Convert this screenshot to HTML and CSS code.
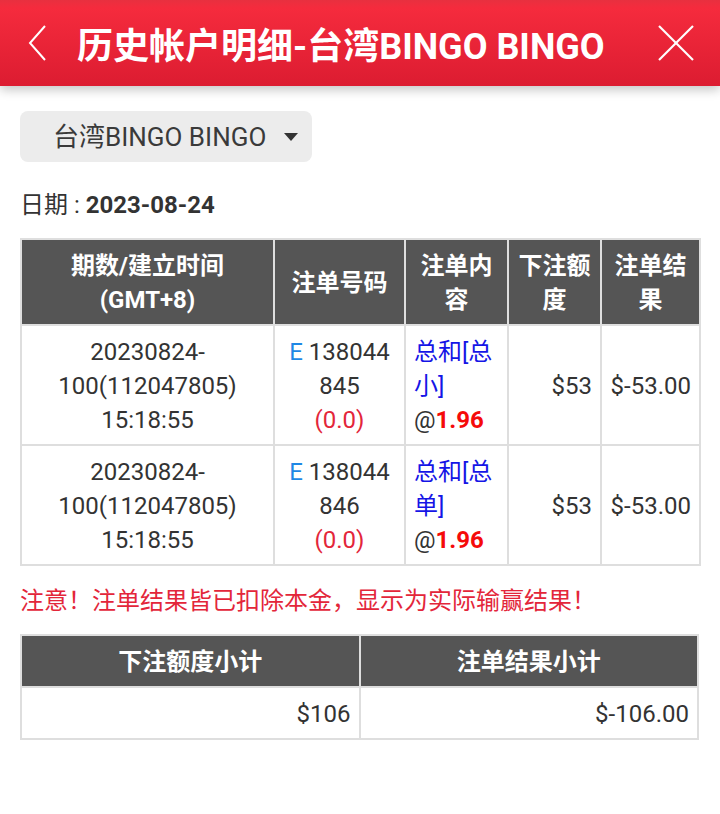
FILE: index.html
```html
<!DOCTYPE html>
<html lang="zh-CN">
<head>
    <meta charset="UTF-8">
    <meta name="viewport" content="width=device-width, initial-scale=1.0">
    <title>历史帐户明细-台湾BINGO BINGO</title>
    <link rel="stylesheet" href="styles.css">
</head>
<body>
    <header class="topbar">
        <svg class="back" width="20" height="36" viewBox="0 0 20 36">
            <polyline points="17,1 2,18 17,35" fill="none" stroke="#fff" stroke-width="2"/>
        </svg>
        <h1 class="title">历史帐户明细-台湾BINGO BINGO</h1>
        <svg class="close" width="36" height="36" viewBox="0 0 36 36">
            <line x1="1" y1="1" x2="35" y2="35" stroke="#fff" stroke-width="2.2"/>
            <line x1="35" y1="1" x2="1" y2="35" stroke="#fff" stroke-width="2.2"/>
        </svg>
    </header>

    <main class="content">
        <div class="picker">
            <span>台湾BINGO BINGO</span>
            <span class="caret"></span>
        </div>

        <p class="date">日期 : <b>2023-08-24</b></p>

        <table class="bets">
            <colgroup>
                <col style="width: 253px">
                <col style="width: 131px">
                <col style="width: 103px">
                <col style="width: 93px">
                <col style="width: 99px">
            </colgroup>
            <thead>
                <tr>
                    <th>期数/建立时间<br>(GMT+8)</th>
                    <th>注单号码</th>
                    <th>注单内容</th>
                    <th>下注额度</th>
                    <th>注单结果</th>
                </tr>
            </thead>
            <tbody>
                <tr>
                    <td class="center">20230824-<br>100(112047805)<br>15:18:55</td>
                    <td class="center"><span class="tag">E</span> 138044 845<br><span class="red">(0.0)</span></td>
                    <td class="left"><span class="blue">总和[总小]</span><br>@<b class="odds">1.96</b></td>
                    <td class="right">$53</td>
                    <td class="right">$-53.00</td>
                </tr>
                <tr>
                    <td class="center">20230824-<br>100(112047805)<br>15:18:55</td>
                    <td class="center"><span class="tag">E</span> 138044 846<br><span class="red">(0.0)</span></td>
                    <td class="left"><span class="blue">总和[总单]</span><br>@<b class="odds">1.96</b></td>
                    <td class="right">$53</td>
                    <td class="right">$-53.00</td>
                </tr>
            </tbody>
        </table>

        <p class="notice">注意！注单结果皆已扣除本金，显示为实际输赢结果！</p>

        <table class="bets">
            <thead>
                <tr>
                    <th>下注额度小计</th>
                    <th>注单结果小计</th>
                </tr>
            </thead>
            <tbody>
                <tr>
                    <td class="right">$106</td>
                    <td class="right">$-106.00</td>
                </tr>
            </tbody>
        </table>
    </main>
</body>
</html>
```

FILE: styles.css
```css
body {
    margin: 0;
    font-family: Roboto, "Noto Sans CJK SC", sans-serif;
    font-size: 24px;
    color: #333;
    background-color: #fff;
}
.topbar {
    height: 86px;
    display: flex;
    align-items: center;
    background: linear-gradient(#e8303f 0px, #f52b3d 8px, #dc1c31 86px);
    box-shadow: 0 4px 10px rgba(0, 0, 0, 0.22);
    color: #fff;
}
.back {
    margin-left: 28px;
}
.title {
    margin: 0 0 0 29px;
    flex: 1;
    font-size: 36px;
    font-weight: bold;
    white-space: nowrap;
}
.close {
    margin-right: 26px;
}
.content {
    padding: 25px 20px 0 20px;
}
.picker {
    display: inline-flex;
    align-items: center;
    width: 292px;
    height: 51px;
    box-sizing: border-box;
    padding: 0 0 4px 33px;
    background-color: #ececec;
    border-radius: 8px;
    font-size: 26px;
    color: #3a3a3a;
}
.caret {
    margin: 4px 0 0 18px;
    border-left: 7px solid transparent;
    border-right: 7px solid transparent;
    border-top: 8px solid #333;
}
.date {
    margin: 26px 0 16px 0;
    line-height: 34px;
}
.bets {
    width: 679px;
    border-collapse: collapse;
    table-layout: fixed;
    line-height: 34px;
}
.bets th, .bets td {
    border: 2px solid #dedede;
    padding: 9px 8px 7px 8px;
}
.bets th {
    background-color: #555;
    color: #fff;
    font-weight: bold;
}
.center {
    text-align: center;
}
.left {
    text-align: left;
}
.right {
    text-align: right;
}
.tag {
    color: #1e88e5;
}
.red {
    color: #e3263a;
}
.blue {
    color: #1515e6;
}
.odds {
    color: #f50a0a;
}
.notice {
    margin: 18px 0 16px 0;
    line-height: 34px;
    color: #e3263a;
}
```
